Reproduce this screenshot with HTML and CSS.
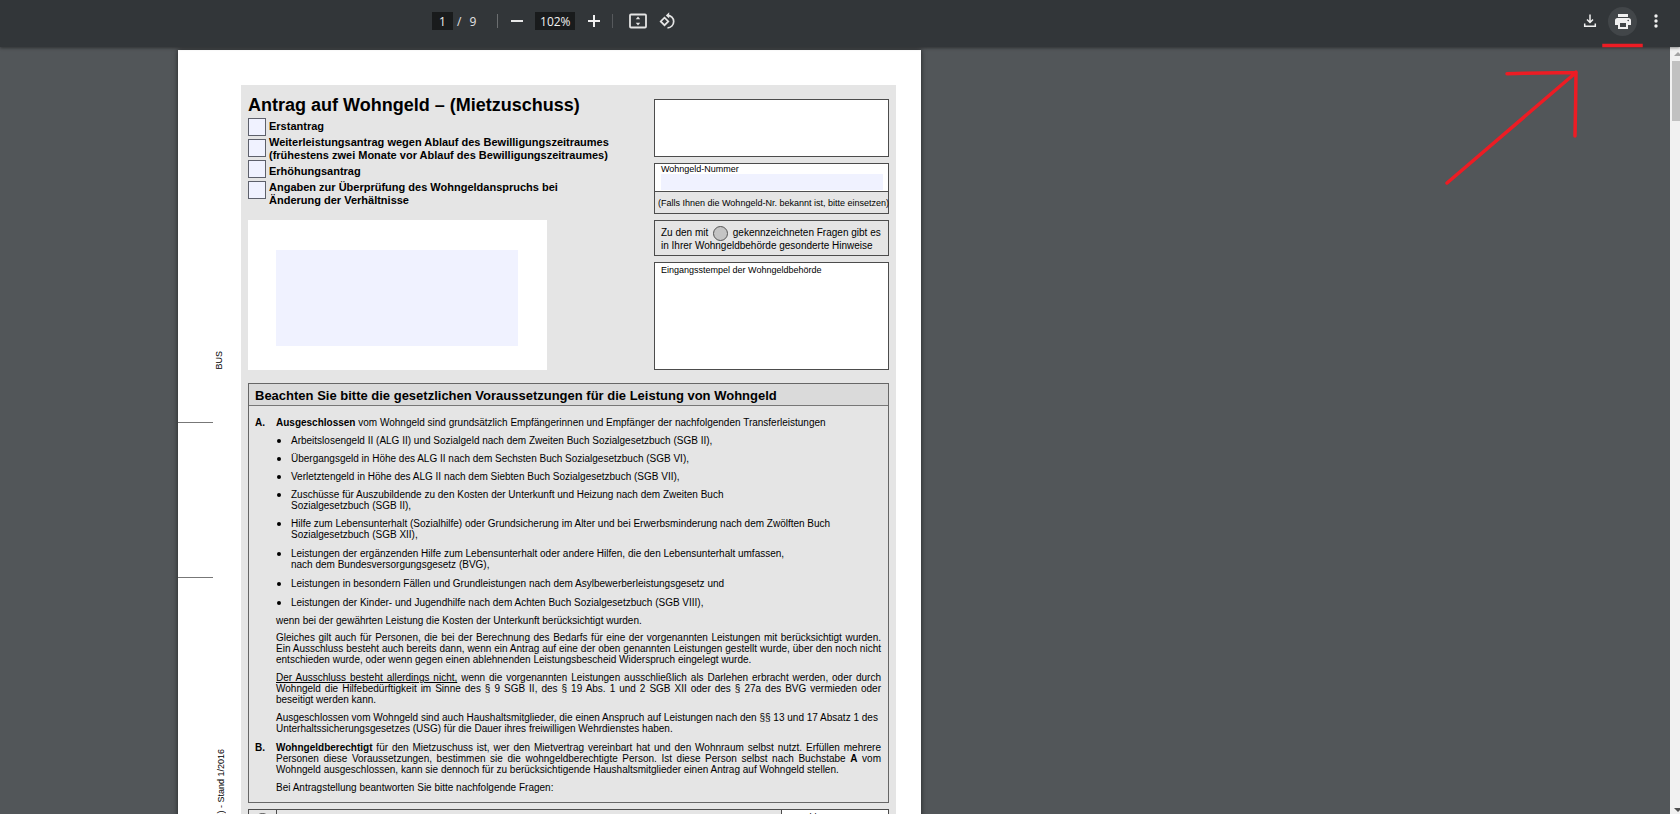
FILE: index.html
```html
<!DOCTYPE html>
<html lang="de">
<head>
<meta charset="utf-8">
<title>Antrag auf Wohngeld</title>
<link rel="stylesheet" href="styles.css">
</head>
<body>
<div class="app">
  <header class="toolbar">
    <div class="tools">
      <input class="field page-field" type="text" value="1" aria-label="Seite">
      <span class="slash">/</span>
      <span class="total">9</span>
      <span class="divider"></span>
      <button class="tool zoom-out" type="button" aria-label="Verkleinern"><svg width="12" height="12" viewBox="0 0 12 12"><path d="M0 6h12" stroke="#e8e8e8" stroke-width="2"/></svg></button>
      <input class="field zoom-field" type="text" value="102%" aria-label="Zoom">
      <button class="tool zoom-in" type="button" aria-label="Vergrößern"><svg width="12" height="12" viewBox="0 0 12 12"><path d="M0 6h12M6 0v12" stroke="#f1f1f1" stroke-width="2"/></svg></button>
      <span class="divider divider-dim"></span>
      <button class="tool fit" type="button" aria-label="An Seite anpassen"><svg width="18" height="16" viewBox="0 0 18 16"><rect x="1" y="1.5" width="16" height="13" rx="1" fill="none" stroke="#e4e4e4" stroke-width="1.8"/><path d="M9 3.6l2.200 2.700H6.800zM9 12.400l2.200-2.700H6.800z" fill="#e4e4e4"/></svg></button>
      <button class="tool rotate" type="button" aria-label="Drehen"><svg width="18" height="18" viewBox="0 0 18 18" fill="none" stroke="#e4e4e4" stroke-width="1.700"><path d="M5.500 5.600l3.800 3.800-3.800 3.800-3.800-3.800z"/><path d="M8.500 3.400a6.200 6.200 0 1 1 0 12.400"/><path d="M10.200.300L6.800 3.400l3.400 3.100z" fill="#e4e4e4" stroke="none"/></svg></button>
    </div>
    <div class="actions">
      <button class="round" type="button" aria-label="Herunterladen"><svg width="14" height="14" viewBox="0 0 14 14" fill="none" stroke="#f1f1f1" stroke-width="1.500"><path d="M7 .5v8M4 5.500l3 3 3-3M1.700 9.500v2.800h10.600V9.500"/></svg></button>
      <button class="round round-active" type="button" aria-label="Drucken"><svg width="16" height="15" viewBox="0 0 16 15"><path d="M3 0h10v3H3zM2.500 4h11A2.500 2.500 0 0 1 16 6.500V11h-3v4H3v-4H0V6.500A2.500 2.500 0 0 1 2.500 4z" fill="#f1f1f1"/><path d="M5 9h6v4H5z" fill="#424649"/><circle cx="13.200" cy="6.500" r=".8" fill="#424649"/></svg></button>
      <button class="round" type="button" aria-label="Weitere Aktionen"><svg width="4" height="14" viewBox="0 0 4 14" fill="#f1f1f1"><circle cx="2" cy="2" r="1.700"/><circle cx="2" cy="7" r="1.700"/><circle cx="2" cy="12" r="1.700"/></svg></button>
    </div>
  </header>

  <main class="viewer">
    <article class="sheet">
      <aside class="gutter">
        <span class="side side-bus">BUS</span>
        <span class="tick tick-first"></span>
        <span class="tick tick-second"></span>
        <span class="side side-stand">s) - Stand 1/2016</span>
      </aside>
      <div class="form">
        <div class="top">
          <section class="left">
            <h1 class="title">Antrag auf Wohngeld – (Mietzuschuss)</h1>
            <div class="kinds">
              <div class="boxes">
                <input class="box" type="checkbox" id="k1">
                <input class="box" type="checkbox" id="k2">
                <input class="box" type="checkbox" id="k3">
                <input class="box" type="checkbox" id="k4">
              </div>
              <div class="labels">
                <label for="k1">Erstantrag</label>
                <label for="k2">Weiterleistungsantrag wegen Ablauf des Bewilligungszeitraumes<br>(frühestens zwei Monate vor Ablauf des Bewilligungszeitraumes)</label>
                <label for="k3">Erhöhungsantrag</label>
                <label for="k4">Angaben zur Überprüfung des Wohngeldanspruchs bei<br>Änderung der Verhältnisse</label>
              </div>
            </div>
            <div class="address"><textarea class="address-field" aria-label="Anschrift"></textarea></div>
          </section>
          <section class="right">
            <div class="card card-blank"></div>
            <div class="card card-number">
              <div class="number-top">
                <label class="small" for="nr">Wohngeld-Nummer</label>
                <input class="number-field" type="text" id="nr">
              </div>
              <p class="small number-note">(Falls Ihnen die Wohngeld-Nr. bekannt ist, bitte einsetzen)</p>
            </div>
            <div class="card card-hint">Zu den mit <span class="dot"></span> gekennzeichneten Fragen gibt es<br>in Ihrer Wohngeldbehörde gesonderte Hinweise</div>
            <div class="card card-stamp small">Eingangsstempel der Wohngeldbehörde</div>
          </section>
        </div>

        <section class="notice">
          <h2 class="notice-title">Beachten Sie bitte die gesetzlichen Voraussetzungen für die Leistung von Wohngeld</h2>
          <div class="clause">
            <b>A.</b>
            <div class="clause-text">
              <p><b>Ausgeschlossen</b> vom Wohngeld sind grundsätzlich Empfängerinnen und Empfänger der nachfolgenden Transferleistungen</p>
              <ul class="list">
                <li>Arbeitslosengeld II (ALG II) und Sozialgeld nach dem Zweiten Buch Sozialgesetzbuch (SGB II),</li>
                <li>Übergangsgeld in Höhe des ALG II nach dem Sechsten Buch Sozialgesetzbuch (SGB VI),</li>
                <li>Verletztengeld in Höhe des ALG II nach dem Siebten Buch Sozialgesetzbuch (SGB VII),</li>
                <li>Zuschüsse für Auszubildende zu den Kosten der Unterkunft und Heizung nach dem Zweiten Buch<br>Sozialgesetzbuch (SGB II),</li>
                <li>Hilfe zum Lebensunterhalt (Sozialhilfe) oder Grundsicherung im Alter und bei Erwerbsminderung nach dem Zwölften Buch<br>Sozialgesetzbuch (SGB XII),</li>
                <li class="loose">Leistungen der ergänzenden Hilfe zum Lebensunterhalt oder andere Hilfen, die den Lebensunterhalt umfassen,<br>nach dem Bundesversorgungsgesetz (BVG),</li>
                <li class="loose">Leistungen in besondern Fällen und Grundleistungen nach dem Asylbewerberleistungsgesetz und</li>
                <li class="loose">Leistungen der Kinder- und Jugendhilfe nach dem Achten Buch Sozialgesetzbuch (SGB VIII),</li>
              </ul>
              <p>wenn bei der gewährten Leistung die Kosten der Unterkunft berücksichtigt wurden.</p>
              <p class="justify tight">Gleiches gilt auch für Personen, die bei der Berechnung des Bedarfs für eine der vorgenannten Leistungen mit berücksichtigt wurden. Ein Ausschluss besteht auch bereits dann, wenn ein Antrag auf eine der oben genannten Leistungen gestellt wurde, über den noch nicht entschieden wurde, oder wenn gegen einen ablehnenden Leistungsbescheid Widerspruch eingelegt wurde.</p>
              <p class="justify"><u>Der Ausschluss besteht allerdings nicht,</u> wenn die vorgenannten Leistungen ausschließlich als Darlehen erbracht werden, oder durch Wohngeld die Hilfebedürftigkeit im Sinne des § 9 SGB II, des § 19 Abs. 1 und 2 SGB XII oder des § 27a des BVG vermieden oder beseitigt werden kann.</p>
              <p>Ausgeschlossen vom Wohngeld sind auch Haushaltsmitglieder, die einen Anspruch auf Leistungen nach den §§ 13 und 17 Absatz 1 des Unterhaltssicherungsgesetzes (USG) für die Dauer ihres freiwilligen Wehrdienstes haben.</p>
            </div>
          </div>
          <div class="clause">
            <b>B.</b>
            <div class="clause-text">
              <p class="justify"><b>Wohngeldberechtigt</b> für den Mietzuschuss ist, wer den Mietvertrag vereinbart hat und den Wohnraum selbst nutzt. Erfüllen mehrere Personen diese Voraussetzungen, bestimmen sie die wohngeldberechtigte Person. Ist diese Person selbst nach Buchstabe <b>A</b> vom Wohngeld ausgeschlossen, kann sie dennoch für zu berücksichtigende Haushaltsmitglieder einen Antrag auf Wohngeld stellen.</p>
              <p>Bei Antragstellung beantworten Sie bitte nachfolgende Fragen:</p>
            </div>
          </div>
        </section>

        <section class="question">
          <div class="q-mark"><span class="dot"></span></div>
          <div class="q-text"></div>
          <div class="q-count small">Anzahl</div>
        </section>
      </div>
    </article>
    <div class="scrollbar">
      <svg class="arrow" width="10" height="14" viewBox="0 0 10 14"><path d="M4 9h8l-4-4z" fill="#a3a3a3"/></svg>
      <div class="thumb"></div>
      <svg class="arrow arrow-down" width="10" height="14" viewBox="0 0 10 14"><path d="M4 8h8l-4 4z" fill="#505050"/></svg>
    </div>
  </main>

  <svg class="marks" width="250" height="160" viewBox="0 0 250 160" fill="none" stroke="#ed1c24" stroke-width="3.500" stroke-linecap="round">
    <path d="M174 5.500h37" stroke-linecap="square"/>
    <path d="M17 143L146 32.500M77 33.800l18-.5 50-.9M146 32l-.4 33-.6 31" stroke-linejoin="round"/>
  </svg>
</div>
</body>
</html>
```
FILE: styles.css
```css
* { box-sizing: border-box; }
body, h1, h2, p, ul { margin: 0; padding: 0; }
body { font-family: "Liberation Sans", Arial, sans-serif; background: #525659; }

.app { position: relative; height: 100vh; display: flex; flex-direction: column; overflow: hidden; }

.toolbar {
  position: relative; z-index: 1; flex: none; height: 47px; padding: 0 10px 5px 432px;
  display: flex; justify-content: space-between; align-items: center;
  background: #323639; box-shadow: 0 1px 3px rgba(0, 0, 0, .45);
}
.tools, .actions { display: flex; align-items: center; }
.tools { font: 12px "Open Sans", sans-serif; color: #e4e4e4; }
.field { height: 18px; padding: 0; border: 0; background: #191b1c; color: #f1f1f1; font: inherit; text-align: center; }
.page-field { width: 21px; }
.zoom-field { width: 40px; }
.slash { margin-left: 4px; }
.total { margin-left: 8px; }
.divider { width: 1px; height: 14px; margin: 0 13px 0 21px; background: #6b6e70; }
.divider-dim { margin: 0 16px 0 12px; background: #56595c; }
.tool, .round { display: flex; align-items: center; justify-content: center; padding: 0; border: 0; background: none; }
.zoom-out { margin-right: 12px; }
.zoom-in { margin-left: 13px; }
.fit { margin-right: 12px; }
.actions { gap: 4px; }
.round { width: 29px; height: 29px; border-radius: 50%; }
.round-active { background: #424649; }

.viewer { flex: 1; min-height: 0; display: flex; justify-content: space-between; padding-left: 178px; overflow: hidden; }
.sheet {
  flex: 0 1 743px; align-self: flex-start; min-height: 1049px; margin-top: 3px;
  display: grid; grid-template-columns: 63px 1fr; padding: 35px 25px 0 0;
  background: #fff; box-shadow: 0 0 5px rgba(0, 0, 0, .6);
}
.gutter { display: flex; flex-direction: column; align-items: flex-start; padding-top: 266px; }
.side { writing-mode: vertical-rl; transform: rotate(180deg); font-size: 9px; line-height: 10px; white-space: nowrap; }
.side-bus { margin-left: 36px; }
.side-stand { margin-left: 38px; }
.tick { width: 35px; height: 1px; background: #777; }
.tick-first { margin-top: 52px; }
.tick-second { margin: 154px 0 171px; }

.form { padding: 14px 7px 0; background: #e5e5e5; }
.top { display: flex; justify-content: space-between; }
.title { font-size: 18px; line-height: 18px; margin-top: -3px; }
.kinds { display: flex; gap: 3px; margin-top: 4px; height: 102px; }
.boxes { display: flex; flex-direction: column; gap: 3px; }
.box { appearance: none; width: 18px; height: 18px; margin: 0; border: 1px solid #5d606b; background: #f0f2ff; }
.labels { display: flex; flex-direction: column; gap: 3px; padding-top: 2px; font-size: 11px; line-height: 13px; font-weight: bold; white-space: nowrap; }
.address { width: 299px; padding: 30px 29px 24px 28px; background: #fff; }
.address-field { display: block; width: 100%; height: 96px; border: 0; resize: none; background: #f0f2ff; }

.right { width: 235px; display: flex; flex-direction: column; gap: 6px; }
.card { border: 1px solid #4c4c4c; padding: 0 7px; }
.small { font-size: 9px; line-height: 10px; }
.card-blank { height: 58px; background: #fff; }
.card-number { padding: 0; }
.number-top { display: flex; flex-direction: column; padding: 0 5px 1px 6px; background: #fff; border-bottom: 1px solid #4c4c4c; }
.number-field { width: 100%; height: 16px; border: 0; padding: 0; background: #f0f2ff; }
.number-note { padding: 6px 0 5px 3px; white-space: nowrap; }
.card-hint { height: 36px; padding: 5px 0 0 6px; font-size: 10px; line-height: 13px; white-space: nowrap; }
.dot { display: inline-block; width: 15px; height: 15px; margin: -6px 2px -3px; vertical-align: -2px; border: 1px solid #555; border-radius: 50%; background: #c4c4c4; }
.card-stamp { flex: 1; padding: 2px 6px; background: #fff; }

.notice { margin-top: 13px; padding-bottom: 9px; border: 1px solid #666; font-size: 10px; line-height: 11px; }
.notice-title { padding: 5px 6px 2px; margin-bottom: 11px; font-size: 13px; line-height: 14px; background: #dadada; border-bottom: 1px solid #777; }
.clause { display: grid; grid-template-columns: 21px 1fr; padding: 0 7px 0 6px; }
.clause-text { display: flex; flex-direction: column; gap: 7px; }
.clause + .clause { margin-top: 8px; }
.list { list-style: none; display: flex; flex-direction: column; gap: 7px; }
.list li { position: relative; padding-left: 15px; }
.list li::before { content: ""; position: absolute; left: 1px; top: 4px; width: 4px; height: 4px; border-radius: 50%; background: #000; }
.list .loose { margin-top: 1px; }
.tight { margin-top: -1px; }
.justify { text-align: justify; }

.question { display: grid; grid-template-columns: 28px 1fr 107px; height: 60px; margin-top: 6px; border: 1px solid #4c4c4c; }
.q-mark { padding-top: 3px; text-align: center; border-right: 1px solid #4c4c4c; }
.q-mark .dot { margin: 0; vertical-align: top; }
.q-count { padding: 2px 7px; background: #fff; border-left: 1px solid #4c4c4c; }

.scrollbar { flex: none; width: 10px; display: flex; flex-direction: column; background: #f1f1f1; }
.arrow { display: block; }
.arrow-down { margin-top: auto; }
.thumb { height: 60px; margin-left: 2px; background: #c1c1c1; }

.marks { position: absolute; z-index: 2; top: 40px; right: 0; }
```
